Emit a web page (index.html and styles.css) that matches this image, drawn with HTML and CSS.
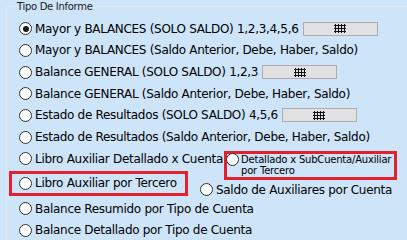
FILE: index.html
```html
<!DOCTYPE html>
<html lang="es">
<head>
    <meta charset="UTF-8">
    <title>Tipo De Informe</title>
    <link rel="stylesheet" href="styles.css">
</head>
<body>
    <fieldset class="group">
        <legend>Tipo De Informe</legend>

        <div class="row"><span class="radio checked"></span><span>Mayor y BALANCES (SOLO SALDO) 1,2,3,4,5,6</span><span class="pick"><svg width="12" height="9" viewBox="0 0 12 9"><path d="M1.5 0V9M4.5 0V9M7.5 0V9M10.5 0V9M0 1.5H12M0 4.5H12M0 7.5H12" stroke="#111" stroke-width="1"/></svg></span></div>
        <div class="row"><span class="radio"></span><span>Mayor y BALANCES (Saldo Anterior, Debe, Haber, Saldo)</span></div>
        <div class="row"><span class="radio"></span><span>Balance GENERAL (SOLO SALDO) 1,2,3</span><span class="pick"><svg width="12" height="9" viewBox="0 0 12 9"><path d="M1.5 0V9M4.5 0V9M7.5 0V9M10.5 0V9M0 1.5H12M0 4.5H12M0 7.5H12" stroke="#111" stroke-width="1"/></svg></span></div>
        <div class="row"><span class="radio"></span><span>Balance GENERAL (Saldo Anterior, Debe, Haber, Saldo)</span></div>
        <div class="row"><span class="radio"></span><span>Estado de Resultados (SOLO SALDO) 4,5,6</span><span class="pick"><svg width="12" height="9" viewBox="0 0 12 9"><path d="M1.5 0V9M4.5 0V9M7.5 0V9M10.5 0V9M0 1.5H12M0 4.5H12M0 7.5H12" stroke="#111" stroke-width="1"/></svg></span></div>
        <div class="row"><span class="radio"></span><span>Estado de Resultados (Saldo Anterior, Debe, Haber, Saldo)</span></div>

        <div class="split">
            <div class="col">
                <div class="row"><span class="radio"></span><span>Libro Auxiliar Detallado x Cuenta</span></div>
                <div class="row boxed left-box"><span class="radio"></span><span>Libro Auxiliar por Tercero</span></div>
            </div>
            <div class="col">
                <div class="boxed right-box"><span class="radio"></span><span class="small">Detallado x SubCuenta/Auxiliar<br>por Tercero</span></div>
                <div class="row saldo"><span class="radio"></span><span>Saldo de Auxiliares por Cuenta</span></div>
            </div>
        </div>

        <div class="row"><span class="radio"></span><span>Balance Resumido por Tipo de Cuenta</span></div>
        <div class="row"><span class="radio"></span><span>Balance Detallado por Tipo de Cuenta</span></div>
    </fieldset>
</body>
</html>
```
FILE: styles.css
```css
body {
    margin: 0;
    padding: 0;
    background-color: #cde4f9;
    font-family: "DejaVu Sans", Tahoma, sans-serif;
    font-size: 12px;
    letter-spacing: -0.3px;
    color: #000;
    overflow: hidden;
    height: 240px;
}

.group {
    margin: 0 0 0 6px;
    padding: 5px 0 0 2px;
    border: 1px solid #e2e7ec;
    border-right: none;
    border-bottom: none;
    min-width: 0;
}

.group legend {
    font-size: 10px;
    letter-spacing: -0.3px;
    line-height: 13px;
    padding: 0 5px 0 2px;
    margin-left: 6px;
    color: #1a1a1a;
}

.row {
    display: flex;
    align-items: center;
    height: 21.67px;
    padding-left: 10px;
    white-space: nowrap;
}

.radio {
    flex: none;
    width: 11px;
    height: 11px;
    border: 1px solid #333;
    border-radius: 50%;
    background-color: #fff;
    margin-right: 3px;
    display: flex;
    align-items: center;
    justify-content: center;
}

.radio.checked::after {
    content: "";
    width: 6px;
    height: 6px;
    border-radius: 50%;
    background-color: #1a1a1a;
}

.pick {
    flex: none;
    width: 73px;
    height: 12px;
    margin-left: 4px;
    background-color: #e1e1e1;
    border: 1px solid #adadad;
    display: flex;
    align-items: center;
    justify-content: center;
}

.split {
    display: grid;
    grid-template-columns: 191px auto;
}

.boxed {
    border: 3px solid #e3202c;
}

.left-box {
    height: 19px;
    width: 166px;
    padding-left: 7px;
    margin-top: 1px;
}

.right-box {
    display: flex;
    align-items: flex-start;
    margin: 3px 0 0 24px;
    width: 167px;
    height: 23px;
    padding-left: 0;
    white-space: nowrap;
}

.right-box .radio {
    margin: -1px 2px 0 -1px;
}

.small {
    font-size: 10px;
    letter-spacing: -0.2px;
    line-height: 11px;
    margin-top: 0;
}

.saldo {
    height: 16px;
    margin-top: 2px;
    padding-left: 0;
}
```
